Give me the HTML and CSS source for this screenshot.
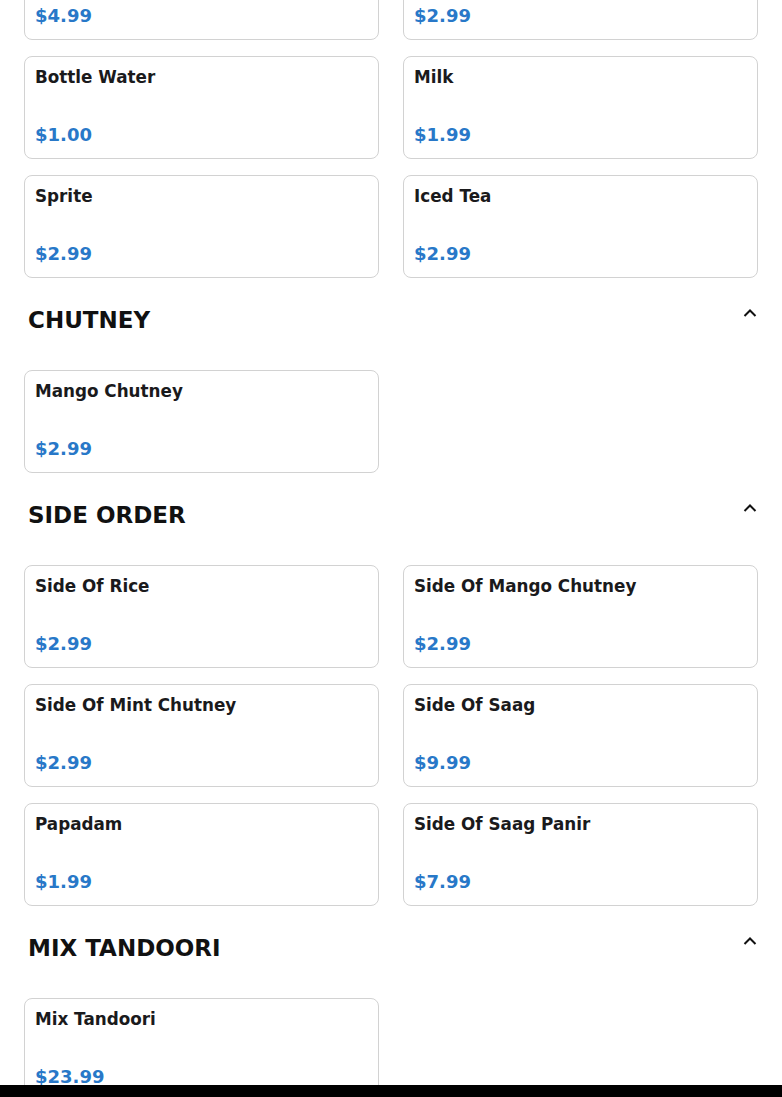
FILE: index.html
```html
<!DOCTYPE html>
<html lang="en">
<head>
<meta charset="utf-8">
<title>Menu</title>
<link rel="stylesheet" href="styles.css">
</head>
<body>
<main class="menu">
  <section class="section section-first">
    <div class="grid">
      <div class="card"><div class="name">Mango Lassi</div><div class="price">$4.99</div></div>
      <div class="card"><div class="name">Coke</div><div class="price">$2.99</div></div>
      <div class="card"><div class="name">Bottle Water</div><div class="price">$1.00</div></div>
      <div class="card"><div class="name">Milk</div><div class="price">$1.99</div></div>
      <div class="card"><div class="name">Sprite</div><div class="price">$2.99</div></div>
      <div class="card"><div class="name">Iced Tea</div><div class="price">$2.99</div></div>
    </div>
  </section>

  <section class="section">
    <header class="section-head">
      <h2 class="section-title">CHUTNEY</h2>
      <svg class="chevron" width="16" height="16" viewBox="0 0 16 16"><polyline points="2.5,10 8,4.5 13.5,10" fill="none" stroke="#111" stroke-width="2"/></svg>
    </header>
    <div class="grid">
      <div class="card"><div class="name">Mango Chutney</div><div class="price">$2.99</div></div>
    </div>
  </section>

  <section class="section">
    <header class="section-head">
      <h2 class="section-title">SIDE ORDER</h2>
      <svg class="chevron" width="16" height="16" viewBox="0 0 16 16"><polyline points="2.5,10 8,4.5 13.5,10" fill="none" stroke="#111" stroke-width="2"/></svg>
    </header>
    <div class="grid">
      <div class="card"><div class="name">Side Of Rice</div><div class="price">$2.99</div></div>
      <div class="card"><div class="name">Side Of Mango Chutney</div><div class="price">$2.99</div></div>
      <div class="card"><div class="name">Side Of Mint Chutney</div><div class="price">$2.99</div></div>
      <div class="card"><div class="name">Side Of Saag</div><div class="price">$9.99</div></div>
      <div class="card"><div class="name">Papadam</div><div class="price">$1.99</div></div>
      <div class="card"><div class="name">Side Of Saag Panir</div><div class="price">$7.99</div></div>
    </div>
  </section>

  <section class="section">
    <header class="section-head">
      <h2 class="section-title">MIX TANDOORI</h2>
      <svg class="chevron" width="16" height="16" viewBox="0 0 16 16"><polyline points="2.5,10 8,4.5 13.5,10" fill="none" stroke="#111" stroke-width="2"/></svg>
    </header>
    <div class="grid">
      <div class="card"><div class="name">Mix Tandoori</div><div class="price">$23.99</div></div>
    </div>
  </section>
</main>
<div class="bottom-bar"></div>
</body>
</html>
```

FILE: styles.css
```css
html, body {
  margin: 0;
  padding: 0;
  background: #ffffff;
}

body {
  font-family: "DejaVu Sans", "Liberation Sans", sans-serif;
  color: #1c1c1c;
  overflow: hidden;
}

.menu {
  padding: 0 24px;
  margin-top: -63px;
}

.grid {
  display: grid;
  grid-template-columns: 1fr 1fr;
  gap: 16px 24px;
}

.card {
  box-sizing: border-box;
  height: 103px;
  border: 1px solid #d2d2d2;
  border-radius: 8px;
  background: #fff;
  padding: 10px;
  display: flex;
  flex-direction: column;
  justify-content: space-between;
}

.name {
  font-size: 16.8px;
  font-weight: bold;
  line-height: 20px;
  color: #1a1a1c;
}

.price {
  font-size: 18px;
  font-weight: bold;
  line-height: 27px;
  color: #2878c8;
}

.section-head {
  display: flex;
  justify-content: space-between;
  align-items: flex-start;
  margin: 28px 0 36px;
  padding-left: 4px;
  height: 28px;
}

.section-title {
  margin: 0;
  font-size: 23px;
  font-weight: bold;
  line-height: 28px;
  color: #111;
}

.chevron {
  display: block;
  margin-top: 0;
  margin-right: 0;
}

.bottom-bar {
  position: fixed;
  left: 0;
  right: 0;
  bottom: 0;
  height: 12px;
  background: #000;
}
```
